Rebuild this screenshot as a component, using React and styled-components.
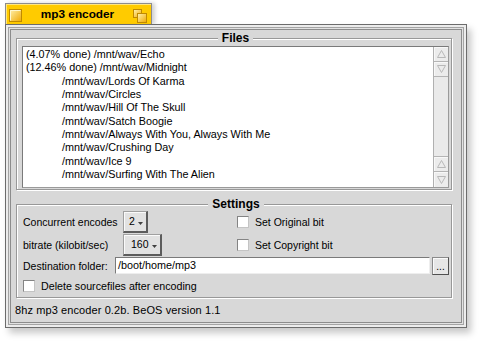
import React from "react";
import styled, { createGlobalStyle } from "styled-components";

const GlobalStyle = createGlobalStyle`
  html, body { margin: 0; padding: 0; background: #ffffff; }
  body {
    font-family: "Liberation Sans", Arial, sans-serif;
    font-size: 10.5px;
    color: #000;
  }
  * { box-sizing: border-box; }
`;

const Page = styled.div`
  width: 481px;
  height: 343px;
  padding: 3px 0 0 5px;
  overflow: hidden;
`;

const Tab = styled.div`
  display: flex;
  align-items: flex-start;
  width: 147px;
  height: 21px;
  padding: 5px 4px 0 3px;
  background: #ffcb00;
  border: 1px solid #8c8c8c;
  border-bottom: none;
  box-shadow: inset 1px 1px 0 #ffe680, 3px 0 4px rgba(0, 0, 0, 0.18);
`;

const Title = styled.div`
  flex: 1;
  text-align: center;
  font-weight: bold;
  font-size: 11.8px;
  line-height: 13px;
  margin-top: -1px;
`;

const Window = styled.div`
  width: 462px;
  height: 304px;
  padding: 5px;
  background: #e0e0e0;
  box-shadow: inset 0 0 0 1px #6c6c6c, inset 0 0 0 3px #ececec,
    inset 0 0 0 4px #a4a4a4, inset 0 0 0 5px #e2e2e2,
    4px 5px 7px rgba(0, 0, 0, 0.22);
  position: relative;
`;

const Content = styled.div`
  height: 100%;
  display: flex;
  flex-direction: column;
  padding-top: 1px;
  background: #d8d8d8;
  border: 1px solid #8c8c8c;
`;

const Group = styled.fieldset`
  margin: ${(p) => p.$top || 0}px 9px 0 5px;
  padding: ${(p) => p.$pad};
  min-width: 0;
  border: 1px solid #989898;
  box-shadow: 1px 1px 0 #ffffff, inset 1px 1px 0 #ffffff;
`;

const Legend = styled.legend`
  margin: 0 auto;
  padding: 0 4px;
  font-weight: bold;
  font-size: 12px;
  line-height: 15px;
  background: #d8d8d8;
`;

const List = styled.div`
  display: flex;
  height: 142px;
  background: #ffffff;
  border: 1px solid #9a9a9a;
  border-top-color: #7a7a7a;
  border-left-color: #7a7a7a;
`;

const Items = styled.div`
  flex: 1;
  padding: 1px 3px;
  font-size: 10.8px;
  line-height: 13.35px;
  white-space: nowrap;
  overflow: hidden;
`;

const Item = styled.div`
  padding-left: ${(p) => (p.$indent ? 36 : 0)}px;
`;

const ScrollBar = styled.div`
  width: 15px;
  display: flex;
  flex-direction: column;
  border-left: 1px solid #b0b0b0;
  background: #ececec;
`;

const ArrowBtn = styled.div`
  height: 15px;
  display: flex;
  align-items: center;
  justify-content: center;
  background: #ececec;
  border-bottom: ${(p) => (p.$last ? "none" : "1px solid #b4b4b4")};
  box-shadow: inset 1px 1px 0 #f8f8f8;
`;

const Track = styled.div`
  flex: 1;
  background: #eaeaea;
  border-bottom: 1px solid #b4b4b4;
`;

const SettingsGrid = styled.div`
  display: grid;
  grid-template-columns: 100px 114px 1fr;
  grid-auto-rows: 22px;
  row-gap: 1px;
  align-items: center;
  margin-top: -1px;
`;

const Label = styled.span`
  white-space: nowrap;
  line-height: 13px;
`;

const Popup = styled.div`
  justify-self: start;
  display: inline-flex;
  align-items: center;
  gap: 3px;
  height: 22px;
  padding: 0 3px 0 ${(p) => p.$padLeft}px;
  background: #e2e2e2;
  border: 1px solid #a0a0a0;
  border-right: 2px solid #5c5c5c;
  border-bottom: 2px solid #5c5c5c;
  box-shadow: inset 1px 1px 0 #fafafa;
  line-height: 13px;
`;

const CheckRow = styled.label`
  display: flex;
  align-items: center;
  gap: 6px;
  white-space: nowrap;
  line-height: 13px;
`;

const Check = styled.span`
  width: 12px;
  height: 12px;
  background: #ffffff;
  border: 1px solid;
  border-color: #848484 #c4c4c4 #c4c4c4 #848484;
  flex: none;
`;

const DestRow = styled.div`
  display: flex;
  align-items: center;
  height: 18px;
  margin-top: 1px;
`;

const DestLabel = styled.span`
  width: 92px;
  flex: none;
  white-space: nowrap;
  line-height: 13px;
`;

const Field = styled.div`
  flex: 1;
  height: 17px;
  align-self: flex-start;
  padding-left: 2px;
  background: #ffffff;
  border: 1px solid;
  border-color: #7a7a7a #eeeeee #eeeeee #7a7a7a;
  line-height: 15px;
  font-size: 10.8px;
`;

const DotsButton = styled.div`
  width: 17px;
  height: 18px;
  margin-left: 2px;
  display: flex;
  align-items: flex-end;
  justify-content: center;
  padding-bottom: 2px;
  background: #e6e6e6;
  border: 1px solid #8a8a8a;
  border-right-color: #505050;
  border-bottom-color: #505050;
  box-shadow: inset 1px 1px 0 #fafafa;
  line-height: 10px;
  font-size: 10px;
`;

const DeleteRow = styled(CheckRow)`
  margin-top: 4px;
  height: 14px;
  font-size: 10.7px;
`;

const Status = styled.div`
  padding: 6px 0 0 4px;
  line-height: 13px;
  font-size: 11px;
  letter-spacing: 0.1px;
  white-space: nowrap;
`;

const CloseBox = () => (
  <svg width="13" height="13" viewBox="0 0 13 13" style={{ flex: "none" }}>
    <defs>
      <linearGradient id="cb" x1="0" y1="0" x2="1" y2="1">
        <stop offset="0" stopColor="#fff3b0" />
        <stop offset="1" stopColor="#f0a800" />
      </linearGradient>
    </defs>
    <rect x="0.5" y="0.5" width="12" height="12" fill="url(#cb)" stroke="#c08a00" />
    <path d="M1.5 11.5 V1.5 H11.5" fill="none" stroke="#fff8d0" />
  </svg>
);

const ZoomBox = () => (
  <svg width="14" height="14" viewBox="0 0 14 14" style={{ flex: "none" }}>
    <defs>
      <linearGradient id="zb" x1="0" y1="0" x2="1" y2="1">
        <stop offset="0" stopColor="#fff3b0" />
        <stop offset="1" stopColor="#f0a800" />
      </linearGradient>
    </defs>
    <rect x="0.5" y="0.5" width="8" height="8" fill="url(#zb)" stroke="#c08a00" />
    <rect x="4.5" y="4.5" width="9" height="9" fill="url(#zb)" stroke="#c08a00" />
  </svg>
);

const Tri = ({ down }) => (
  <svg width="9" height="8" viewBox="0 0 9 8">
    <polygon
      points={down ? "0.5,0.5 8.5,0.5 4.5,7.5" : "4.5,0.5 8.5,7.5 0.5,7.5"}
      fill="none"
      stroke="#b8b8b8"
    />
  </svg>
);

const PopArrow = () => (
  <svg width="5" height="3" viewBox="0 0 5 3" style={{ marginTop: 3 }}>
    <polygon points="0,0 5,0 2.5,3" fill="#404040" />
  </svg>
);

const files = [
  { text: "(4.07% done) /mnt/wav/Echo" },
  { text: "(12.46% done) /mnt/wav/Midnight" },
  { text: "/mnt/wav/Lords Of Karma", indent: true },
  { text: "/mnt/wav/Circles", indent: true },
  { text: "/mnt/wav/Hill Of The Skull", indent: true },
  { text: "/mnt/wav/Satch Boogie", indent: true },
  { text: "/mnt/wav/Always With You, Always With Me", indent: true },
  { text: "/mnt/wav/Crushing Day", indent: true },
  { text: "/mnt/wav/Ice 9", indent: true },
  { text: "/mnt/wav/Surfing With The Alien", indent: true },
];

export default function App() {
  return (
    <Page>
      <GlobalStyle />
      <Tab>
        <CloseBox />
        <Title>mp3 encoder</Title>
        <ZoomBox />
      </Tab>
      <Window>
        <Content>
          <Group $pad="0 2px 1px 5px">
            <Legend>Files</Legend>
            <List>
              <Items>
                {files.map((f) => (
                  <Item key={f.text} $indent={f.indent}>
                    {f.text}
                  </Item>
                ))}
              </Items>
              <ScrollBar>
                <ArrowBtn><Tri /></ArrowBtn>
                <ArrowBtn><Tri down /></ArrowBtn>
                <Track />
                <ArrowBtn><Tri /></ArrowBtn>
                <ArrowBtn $last><Tri down /></ArrowBtn>
              </ScrollBar>
            </List>
          </Group>
          <Group $top={7} $pad="0 2px 4px 6px">
            <Legend>Settings</Legend>
            <SettingsGrid>
              <Label>Concurrent encodes</Label>
              <Popup $padLeft={5}>
                2<PopArrow />
              </Popup>
              <CheckRow>
                <Check />
                Set Original bit
              </CheckRow>
              <Label>bitrate (kilobit/sec)</Label>
              <Popup $padLeft={7}>
                160<PopArrow />
              </Popup>
              <CheckRow>
                <Check />
                Set Copyright bit
              </CheckRow>
            </SettingsGrid>
            <DestRow>
              <DestLabel>Destination folder:</DestLabel>
              <Field>/boot/home/mp3</Field>
              <DotsButton>...</DotsButton>
            </DestRow>
            <DeleteRow>
              <Check />
              Delete sourcefiles after encoding
            </DeleteRow>
          </Group>
          <Status>8hz mp3 encoder 0.2b. BeOS version 1.1</Status>
        </Content>
      </Window>
    </Page>
  );
}
